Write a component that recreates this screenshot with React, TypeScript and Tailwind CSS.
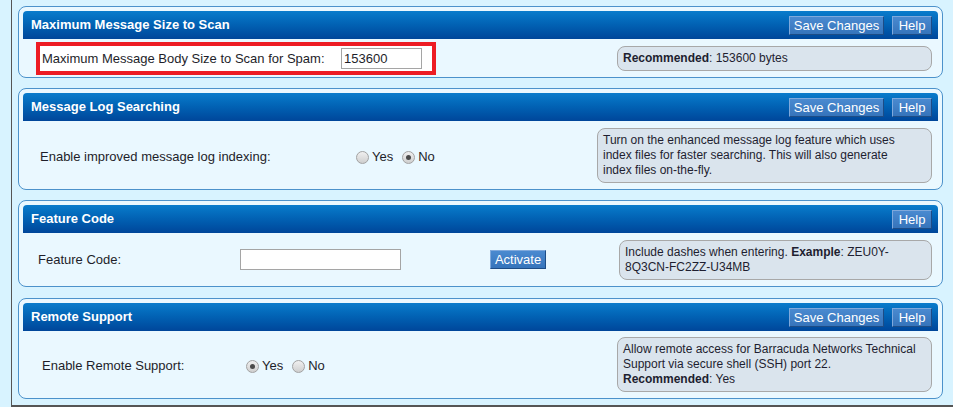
import React from "react";

const font = { fontFamily: '"Liberation Sans", Arial, sans-serif' };

const HeadButton = ({ label, width }: { label: string; width: string }) => (
  <button
    className={`${width} h-[19px] flex items-center justify-center text-[13px] leading-none text-white bg-gradient-to-b from-[#4a8ad0] to-[#3674bb] border border-t-[#7fa9dc] border-l-[#7fa9dc] border-r-[#1d4c86] border-b-[#1d4c86]`}
  >
    {label}
  </button>
);

const Radio = ({ checked }: { checked?: boolean }) => (
  <span className="w-[13px] h-[13px] rounded-full border border-[#a2a2a2] bg-gradient-to-b from-[#f0f0f0] to-[#cfcfcf] flex items-center justify-center">
    {checked && <span className="w-[5px] h-[5px] rounded-full bg-[#4a4a4a]" />}
  </span>
);

const Panel = ({
  title,
  save = true,
  bodyHeight,
  children,
}: {
  title: string;
  save?: boolean;
  bodyHeight: string;
  children: React.ReactNode;
}) => (
  <div className="rounded-[8px] border border-[#4c92cb] bg-[#eaf8ff] px-[4px] pt-[4px]">
    <div className="h-[28px] rounded-t-[4px] bg-gradient-to-b from-[#0a7ccc] to-[#00469a] flex items-center justify-between pl-[8px] pr-[6px]">
      <span className="text-white font-bold text-[13px]">{title}</span>
      <div className="flex gap-[8px]">
        {save && <HeadButton label="Save Changes" width="w-[95px]" />}
        <HeadButton label="Help" width="w-[40px]" />
      </div>
    </div>
    <div className={`${bodyHeight} flex items-center justify-between pr-[6px]`}>{children}</div>
  </div>
);

const Info = ({ width, children }: { width: string; children: React.ReactNode }) => (
  <div
    className={`${width} rounded-[8px] border border-[#a8a8a8] bg-[#dae4ed] px-[5px] py-[4px] text-[12px] leading-[15px] text-[#1e1e30] whitespace-nowrap`}
  >
    {children}
  </div>
);

export default function App() {
  return (
    <div className="min-h-screen bg-[#d8f3ff] text-[#1e1e2a]" style={font}>
      <div className="ml-[11px] border-l border-b-2 border-[#555] pl-[6px] pr-[10px] pt-[6px] pb-[6px] flex flex-col gap-[10px]">
        <Panel title="Maximum Message Size to Scan" bodyHeight="h-[38px]">
          <div className="ml-[13px] mt-[1px] w-[400px] h-[33px] border-[4px] border-[#ed1c24] bg-white flex items-center pl-[2px]">
            <span className="text-[13px] w-[299px]">Maximum Message Body Size to Scan for Spam:</span>
            <div className="w-[81px] h-[21px] border border-[#a5a5a5] bg-white text-[13px] pl-[2px] flex items-center">
              153600
            </div>
          </div>
          <Info width="w-[315px]">
            <b>Recommended</b>: 153600 bytes
          </Info>
        </Panel>

        <Panel title="Message Log Searching" bodyHeight="h-[68px]">
          <div className="ml-[17px] mt-[4px] flex items-center text-[13px]">
            <span className="w-[316px]">Enable improved message log indexing:</span>
            <div className="flex items-center gap-[3px]">
              <Radio />
              <span className="mr-[6px]">Yes</span>
              <Radio checked />
              <span>No</span>
            </div>
          </div>
          <Info width="w-[335px]">
            Turn on the enhanced message log feature which uses
            <br />
            index files for faster searching. This will also generate
            <br />
            index files on-the-fly.
          </Info>
        </Panel>

        <div className="flex flex-col">
          <Panel title="Feature Code" save={false} bodyHeight="h-[53px]">
            <div className="ml-[15px] flex items-center text-[13px]">
              <span className="w-[202px]">Feature Code:</span>
              <div className="w-[161px] h-[21px] border border-[#a5a5a5] bg-white" />
              <div className="ml-[89px]">
                <HeadButton label="Activate" width="w-[56px]" />
              </div>
            </div>
            <Info width="w-[313px]">
              Include dashes when entering. <b>Example</b>: ZEU0Y-
              <br />
              8Q3CN-FC2ZZ-U34MB
            </Info>
          </Panel>
        </div>

        <div className="mt-[1px]">
          <Panel title="Remote Support" bodyHeight="h-[67px]">
            <div className="ml-[19px] mt-[3px] flex items-center text-[13px]">
              <span className="w-[204px]">Enable Remote Support:</span>
              <div className="flex items-center gap-[3px]">
                <Radio checked />
                <span className="mr-[6px]">Yes</span>
                <Radio />
                <span>No</span>
              </div>
            </div>
            <Info width="w-[315px]">
              Allow remote access for Barracuda Networks Technical
              <br />
              Support via secure shell (SSH) port 22.
              <br />
              <b>Recommended</b>: Yes
            </Info>
          </Panel>
        </div>
      </div>
    </div>
  );
}
